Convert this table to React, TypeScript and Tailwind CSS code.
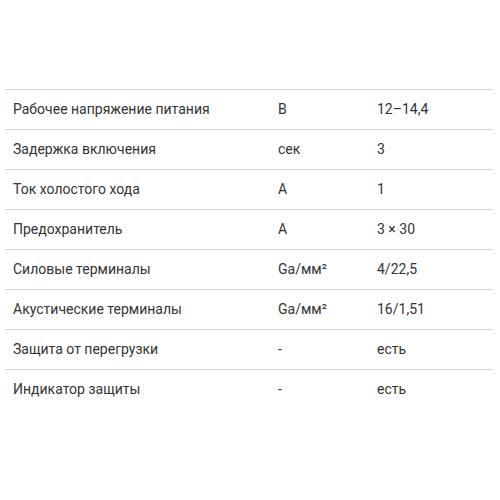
const rows: [string, string, string][] = [
  ["Рабочее напряжение питания", "В", "12–14,4"],
  ["Задержка включения", "сек", "3"],
  ["Ток холостого хода", "А", "1"],
  ["Предохранитель", "А", "3 × 30"],
  ["Силовые терминалы", "Ga/мм²", "4/22,5"],
  ["Акустические терминалы", "Ga/мм²", "16/1,51"],
  ["Защита от перегрузки", "-", "есть"],
  ["Индикатор защиты", "-", "есть"],
];

export default function App() {
  return (
    <div className="w-[500px] h-[500px] bg-white pt-[89px] font-['Roboto',sans-serif] text-[14px] text-[#333]">
      <div className="ml-[5px] w-[488px]">
        {rows.map(([name, unit, value], i) => (
          <div
            key={i}
            className="grid grid-cols-[265px_99px_1fr] items-center h-[40px] pl-2 border-t border-[#d3d3d3]"
          >
            <span>{name}</span>
            <span>{unit}</span>
            <span>{value}</span>
          </div>
        ))}
      </div>
    </div>
  );
}
